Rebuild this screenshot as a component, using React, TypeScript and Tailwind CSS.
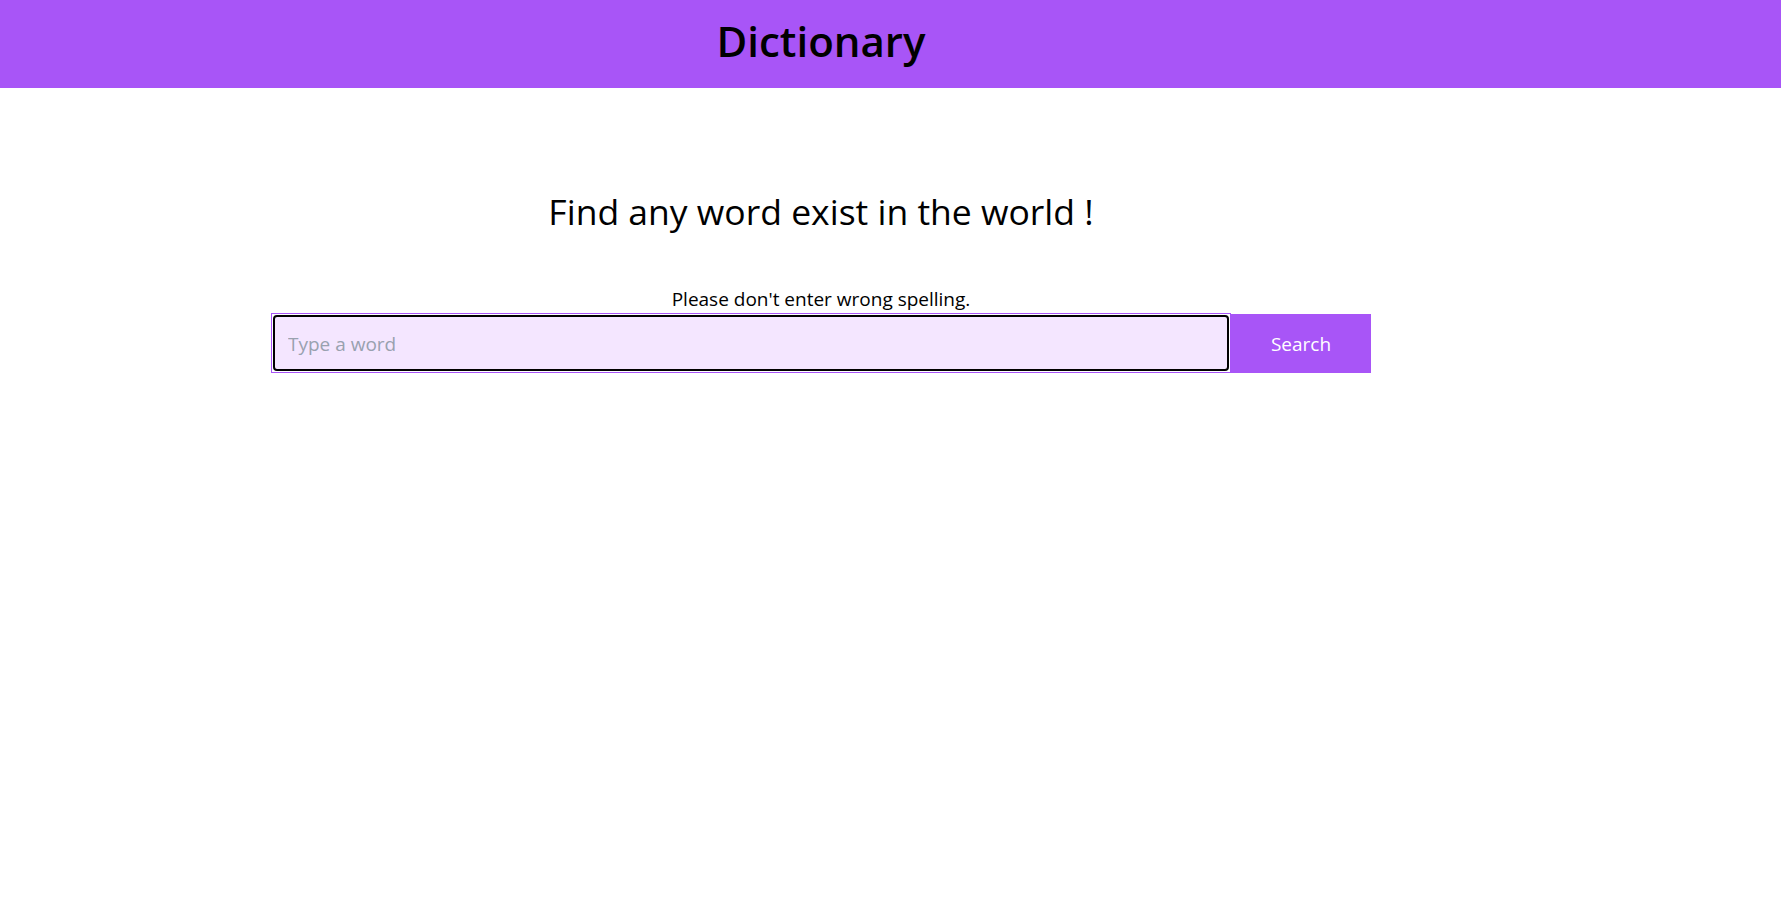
import React from 'react';

const App = () => {
  return (
    <div className="min-h-screen w-full bg-white text-black font-['Open_Sans',sans-serif]">
      {/* Header */}
      <header className="h-[88px] w-full bg-[#a855f7]">
        <div className="w-[1642px] h-full flex items-center justify-center pb-[6px]">
          <h1 className="text-[42px] font-semibold leading-tight">Dictionary</h1>
        </div>
      </header>

      {/* Search area */}
      <main className="w-[1642px] flex flex-col items-center">
        <h2 className="mt-[96px] text-[35.5px] leading-[54px]">Find any word exist in the world !</h2>
        <p className="mt-[47px] text-[19px] leading-[28px]">Please don't enter wrong spelling.</p>
        <div className="flex">
          <div className="w-[960px] h-[60px] border border-[#a855f7] bg-white p-px">
            <input
              type="text"
              placeholder="Type a word"
              className="w-full h-full rounded-[4px] border-2 border-black bg-[#f4e6ff] px-[13px] pt-[2px] text-[19px] outline-none placeholder:text-gray-400"
            />
          </div>
          <button className="w-[140px] h-[59px] mt-px pt-[2px] bg-[#a855f7] text-white text-[19px]">Search</button>
        </div>
      </main>
    </div>
  );
};

export default App;
